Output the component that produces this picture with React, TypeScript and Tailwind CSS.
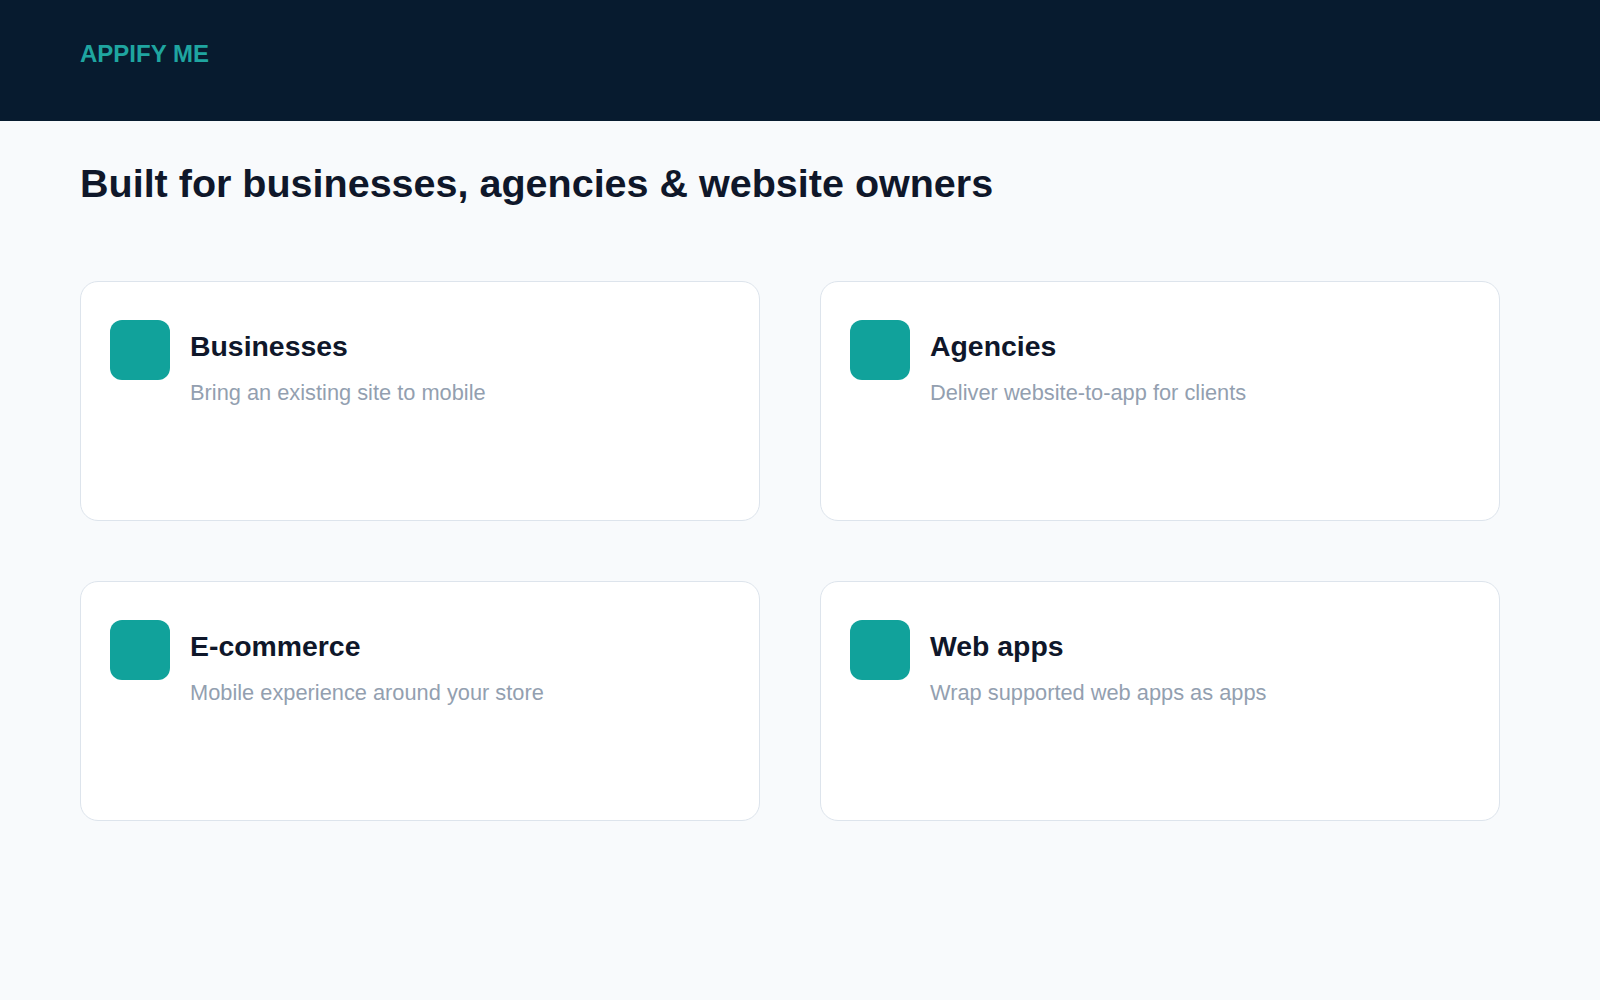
import React from "react";

type Audience = {
  title: string;
  description: string;
};

const audiences: Audience[] = [
  { title: "Businesses", description: "Bring an existing site to mobile" },
  { title: "Agencies", description: "Deliver website-to-app for clients" },
  { title: "E-commerce", description: "Mobile experience around your store" },
  { title: "Web apps", description: "Wrap supported web apps as apps" },
];

function AudienceCard({ title, description }: Audience) {
  return (
    <div className="h-[240px] rounded-[18px] border border-[#dde4ec] bg-white px-[29px] pt-[38px]">
      <div className="flex gap-5">
        <div className="h-[60px] w-[60px] shrink-0 rounded-[12px] bg-[#11a29b]"></div>
        <div className="mt-[9px] flex flex-col">
          <h3 className="text-[28.4px] leading-[34px] font-bold text-[#0f172a]">
            {title}
          </h3>
          <p className="mt-4 text-[21.8px] leading-[28px] text-[#939fb0]">
            {description}
          </p>
        </div>
      </div>
    </div>
  );
}

export default function App() {
  return (
    <div className="min-h-[1000px] bg-[#f8fafc] font-['Liberation_Sans',Arial,sans-serif]">
      <header className="h-[121px] bg-[#071b2f] px-20 pt-[38px]">
        <span className="text-2xl leading-8 font-bold text-[#1fa5a0]">
          APPIFY ME
        </span>
      </header>

      <main className="px-20 pt-[39px]">
        <h1 className="text-[39.5px] leading-[46px] font-bold text-[#0f172a]">
          Built for businesses, agencies &amp; website owners
        </h1>

        <div className="mt-[75px] grid w-[1420px] grid-cols-2 gap-[60px]">
          {audiences.map((item) => (
            <AudienceCard key={item.title} {...item} />
          ))}
        </div>
      </main>
    </div>
  );
}
